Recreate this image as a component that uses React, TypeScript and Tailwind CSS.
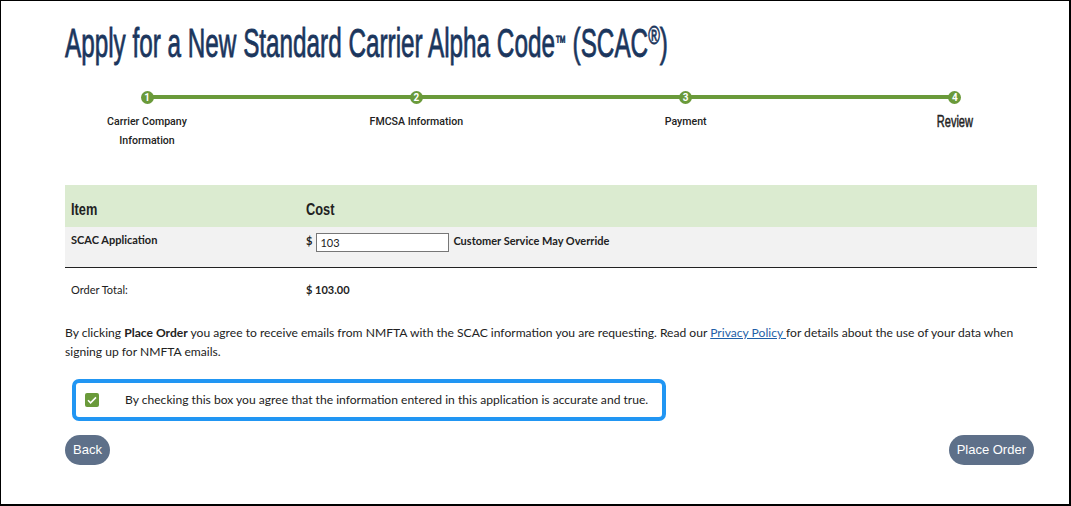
import React from 'react';

const steps = [
  { n: 1, label: 'Carrier Company Information' },
  { n: 2, label: 'FMCSA Information' },
  { n: 3, label: 'Payment' },
  { n: 4, label: 'Review', active: true },
];

function Stepper() {
  return (
    <div className="relative mx-[17px] mt-[28px] h-[70px]">
      <div className="absolute left-[65px] right-[65px] top-[4px] h-[4px] bg-[#6a9a3a]" />
      <div className="relative flex justify-between">
        {steps.map((s) => (
          <div key={s.n} className="flex w-[130px] flex-col items-center">
            <div className="flex h-[13px] w-[13px] items-center justify-center rounded-full bg-[#6a9a3a] font-['Roboto',sans-serif] text-[10px] font-bold leading-none text-white">
              {s.n}
            </div>
            {s.active ? (
              <div className="mt-[8px] inline-block scale-x-[0.65] font-['Liberation_Sans',sans-serif] text-[17px] leading-[19px] text-[#222] [-webkit-text-stroke:0.5px_#222]">
                {s.label}
              </div>
            ) : (
              <div className="mt-[8px] w-[100px] text-center font-['Roboto',sans-serif] text-[10.6px] font-medium leading-[19px] text-[#222]">
                {s.label}
              </div>
            )}
          </div>
        ))}
      </div>
    </div>
  );
}

function OrderTable() {
  return (
    <div className="mt-[24px] font-['Lato',sans-serif] text-[#222]">
      <div className="flex h-[42px] items-center bg-[#dbebd0] pt-[8px] font-['Liberation_Sans',sans-serif] text-[16px] font-bold">
        <div className="w-[241px] pl-[6px]">
          <span className="inline-block origin-left scale-x-[0.8]">Item</span>
        </div>
        <div>
          <span className="inline-block origin-left scale-x-[0.8]">Cost</span>
        </div>
      </div>
      <div className="flex h-[41px] border-b border-[#222] bg-[#f2f2f2] pt-[6px] text-[11px] font-bold leading-[14px]">
        <div className="w-[241px] pl-[6px]">SCAC Application</div>
        <div className="flex items-start">
          <span className="pt-[1px]">$</span>
          <input
            readOnly
            value="103"
            className="ml-[4px] h-[19px] w-[133px] border border-[#777] bg-white px-[3px] text-[11px] font-normal outline-none"
          />
          <span className="ml-[4px] pt-[1px]">Customer Service May Override</span>
        </div>
      </div>
      <div className="flex h-[44px] items-center text-[11px]">
        <div className="w-[241px] pl-[6px] pt-[1px]">Order Total:</div>
        <div className="font-bold">$ 103.00</div>
      </div>
    </div>
  );
}

export default function App() {
  return (
    <div className="h-[506px] w-[1071px] overflow-hidden border-t border-l border-r-2 border-b-2 border-black bg-white">
      <div className="mx-[64px] w-[972px]">
        <div className="h-[62px] pt-[22px]">
          <h1 className="inline-block origin-left scale-x-[0.607] whitespace-nowrap font-['Liberation_Sans',sans-serif] text-[40px] leading-[40px] text-[#1b365d] [-webkit-text-stroke:0.8px_#1b365d]">
            Apply for a New Standard Carrier Alpha Code
            <sup className="text-[18px]">™</sup> (SCAC<sup className="text-[26px]">®</sup>)
          </h1>
        </div>
        <Stepper />
        <OrderTable />
        <p className="mt-[11px] font-['Lato',sans-serif] text-[12.1px] leading-[19px] text-[#222]">
          By clicking <b>Place Order</b> you agree to receive emails from NMFTA with the SCAC information you are
          requesting. Read our{' '}
          <a className="text-[#1f5fa8] underline" href="#">
            Privacy Policy{' '}
          </a>
          for details about the use of your data when signing up for NMFTA emails.
        </p>
        <div className="ml-[7px] mt-[18px] flex h-[42px] w-[594px] items-center rounded-[7px] border-4 border-[#2196f3] pl-[9px]">
          <span className="flex h-[14px] w-[14px] items-center justify-center rounded-[2px] bg-[#6a9a3a]">
            <svg viewBox="0 0 14 14" className="h-[14px] w-[14px]">
              <path d="M3 7.2l2.6 2.6L11 4.4" fill="none" stroke="white" strokeWidth="1.6" />
            </svg>
          </span>
          <span className="ml-[26px] font-['Lato',sans-serif] text-[12.1px] text-[#222]">
            By checking this box you agree that the information entered in this application is accurate and true.
          </span>
        </div>
        <div className="mt-[14px] flex justify-between font-['Liberation_Sans',sans-serif] text-[13px] text-white">
          <button className="h-[30px] rounded-full bg-[#5e7089] px-[8px]">Back</button>
          <button className="mr-[3px] h-[30px] rounded-full bg-[#5e7089] px-[8px]">Place Order</button>
        </div>
      </div>
    </div>
  );
}
